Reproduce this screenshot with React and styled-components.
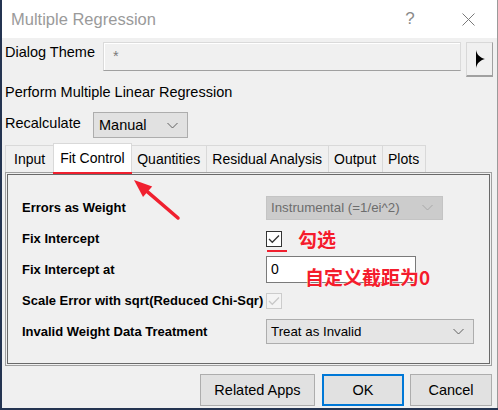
import React from 'react';
import styled, { createGlobalStyle } from 'styled-components';

const GlobalStyle = createGlobalStyle`
  html, body {
    margin: 0;
    padding: 0;
    background: #243451;
  }
  body {
    width: 498px;
    height: 410px;
    overflow: hidden;
    font-family: "Liberation Sans", Arial, sans-serif;
  }
`;

const Window = styled.div`
  position: relative;
  margin-left: 2px;
  width: 495px;
  height: 408px;
  background: #f0f0f0;
  border-right: 1px solid #9a9a9a;
  display: flex;
  flex-direction: column;
  font-size: 14.5px;
  color: #000;
`;

const TitleBar = styled.div`
  height: 38px;
  background: #fff;
  display: flex;
  align-items: center;
  padding-left: 9px;
`;

const TitleText = styled.div`
  flex: 1;
  font-size: 16.5px;
  color: #9a9a9a;
`;

const CaptionButton = styled.div`
  width: 58px;
  height: 38px;
  display: flex;
  align-items: center;
  justify-content: center;
  color: #8a8a8a;
  font-size: 17px;
`;

const ThemeRow = styled.div`
  margin-top: 4px;
  height: 35px;
  display: flex;
  align-items: flex-start;
  padding-left: 3px;
`;

const RowLabel = styled.div`
  width: ${(p) => p.width}px;
  line-height: 20px;
  margin-top: ${(p) => p.offset || 0}px;
  white-space: nowrap;
`;

const ThemeField = styled.div`
  box-sizing: border-box;
  width: 358px;
  height: 29px;
  background: #f0f0f0;
  border: 1px solid #dadada;
  border-bottom-color: #a0a0a0;
  box-shadow: inset 1px 1px 0 #fff;
  color: #7a7a7a;
  padding-left: 9px;
  line-height: 27px;
`;

const ArrowButton = styled.div`
  box-sizing: border-box;
  margin-left: 5px;
  width: 27px;
  height: 35px;
  border: 1px solid #d8d8d8;
  border-right-color: #a0a0a0;
  border-bottom: 2px solid #a0a0a0;
  background: #f0f0f0;
  display: flex;
  align-items: center;
  justify-content: center;
  padding-left: 2px;
`;

const Description = styled.div`
  margin-top: 5px;
  padding-left: 3px;
  line-height: 20px;
`;

const RecalcRow = styled.div`
  margin-top: 10px;
  height: 26px;
  display: flex;
  align-items: flex-start;
  padding-left: 3px;
`;

const Combo = styled.div`
  box-sizing: border-box;
  width: ${(p) => p.width}px;
  height: ${(p) => p.height}px;
  display: flex;
  align-items: center;
  justify-content: space-between;
  padding: 0 9px 0 ${(p) => p.pad || 4}px;
  background: ${(p) => (p.disabled ? '#cccccc' : p.light ? '#e5e5e5' : '#e1e1e1')};
  border: 1px solid ${(p) => (p.disabled ? '#c4c4c4' : '#adadad')};
  color: ${(p) => (p.disabled ? '#6d6d6d' : '#000')};
  font-size: ${(p) => p.size || 14.5}px;
  white-space: nowrap;
`;

const Tabs = styled.div`
  margin-top: 5px;
  height: 29px;
  display: flex;
  align-items: flex-end;
  padding-left: 3px;
`;

const Tab = styled.div`
  position: relative;
  box-sizing: border-box;
  height: ${(p) => (p.active ? 29 : 27)}px;
  margin-left: -1px;
  padding: 0 ${(p) => p.pad}px;
  display: flex;
  align-items: center;
  font-size: 14px;
  background: ${(p) => (p.active ? '#fff' : '#f0f0f0')};
  border: 1px solid #d9d9d9;
  border-bottom: none;
  z-index: ${(p) => (p.active ? 2 : 1)};
  &:first-child {
    margin-left: 0;
  }
  ${(p) =>
    p.marked &&
    `
    &::after {
      content: '';
      position: absolute;
      left: -1px;
      right: -1px;
      bottom: -2px;
      height: 2.5px;
      background: #f0202f;
    }
  `}
`;

const Panel = styled.div`
  box-sizing: border-box;
  margin-left: 3px;
  width: 487px;
  height: 194px;
  border: 1px solid #a0a0a0;
  padding: 1px;
`;

const PanelInner = styled.div`
  box-sizing: border-box;
  height: 100%;
  border: 1px solid #696969;
  padding: 17px 0 0 14px;
  display: grid;
  grid-template-columns: 244px 1fr;
  grid-auto-rows: 31px;
  align-items: center;
`;

const FieldLabel = styled.div`
  font-weight: bold;
  font-size: 13px;
  white-space: nowrap;
`;

const CheckCell = styled.div`
  display: flex;
  align-items: center;
  gap: 16px;
`;

const CheckBox = styled.div`
  position: relative;
  box-sizing: border-box;
  width: 16px;
  height: 16px;
  border: 1px solid ${(p) => (p.disabled ? '#cccccc' : '#333')};
  background: ${(p) => (p.disabled ? '#f4f4f4' : '#fff')};
  display: flex;
  align-items: center;
  justify-content: center;
  ${(p) =>
    p.marked &&
    `
    &::after {
      content: '';
      position: absolute;
      left: 0;
      top: 18px;
      width: 20px;
      height: 2.5px;
      background: #f0202f;
    }
  `}
`;

const Note = styled.span`
  font-family: "Noto Sans CJK SC", "Liberation Sans", sans-serif;
  font-weight: bold;
  font-size: ${(p) => p.size}px;
  color: #f41c2c;
  text-shadow: 0 0 1px #fff, 0 0 1px #fff;
  white-space: nowrap;
`;

const InputCell = styled.div`
  position: relative;
`;

const TextInput = styled.div`
  box-sizing: border-box;
  width: 150px;
  height: 27px;
  background: #fff;
  border: 1px solid #7a7a7a;
  padding-left: 4px;
  line-height: 25px;
  font-size: 14px;
`;

const OverNote = styled(Note)`
  position: absolute;
  left: 39px;
  top: 10px;
  line-height: 22px;
`;

const Footer = styled.div`
  margin-top: 8px;
  display: flex;
  justify-content: flex-end;
  gap: 6px;
  padding-right: 5px;
`;

const Button = styled.div`
  box-sizing: border-box;
  width: ${(p) => p.width}px;
  height: 32px;
  margin-right: ${(p) => p.space || 0}px;
  display: flex;
  align-items: center;
  justify-content: center;
  background: #e1e1e1;
  border: ${(p) => (p.primary ? '2px solid #0078d7' : '1px solid #adadad')};
`;

const ArrowMark = styled.svg`
  position: absolute;
  left: 125px;
  top: 173px;
  pointer-events: none;
  z-index: 5;
`;

const Chevron = ({ color = '#606060' }) => (
  <svg width="11" height="7" viewBox="0 0 11 7">
    <polyline points="0.5,1 5.5,6 10.5,1" fill="none" stroke={color} strokeWidth="1" />
  </svg>
);

const Check = ({ color }) => (
  <svg width="12" height="10" viewBox="0 0 12 10">
    <polyline points="1,5 4.3,8.3 11,1.5" fill="none" stroke={color} strokeWidth="1.3" />
  </svg>
);

export default function App() {
  return (
    <>
      <GlobalStyle />
      <Window>
        <TitleBar>
          <TitleText>Multiple Regression</TitleText>
          <CaptionButton>?</CaptionButton>
          <CaptionButton>
            <svg width="13" height="13" viewBox="0 0 13 13">
              <path d="M0.5 0.5 L12.5 12.5 M12.5 0.5 L0.5 12.5" stroke="#7a7a7a" strokeWidth="1" />
            </svg>
          </CaptionButton>
        </TitleBar>

        <ThemeRow>
          <RowLabel width={98}>Dialog Theme</RowLabel>
          <ThemeField>*</ThemeField>
          <ArrowButton>
            <svg width="9" height="18" viewBox="0 0 9 18">
              <path d="M0 0 C1 5 4 7.5 9 9 C4 10.5 1 13 0 18 Z" fill="#000" />
            </svg>
          </ArrowButton>
        </ThemeRow>

        <Description>Perform Multiple Linear Regression</Description>

        <RecalcRow>
          <RowLabel width={88} offset={1}>Recalculate</RowLabel>
          <Combo width={95} height={26} pad={5}>
            Manual
            <Chevron />
          </Combo>
        </RecalcRow>

        <Tabs>
          <Tab pad={8}>Input</Tab>
          <Tab pad={6} active marked>Fit Control</Tab>
          <Tab pad={5.5}>Quantities</Tab>
          <Tab pad={5.5}>Residual Analysis</Tab>
          <Tab pad={5.5}>Output</Tab>
          <Tab pad={5.5}>Plots</Tab>
        </Tabs>

        <Panel>
          <PanelInner>
            <FieldLabel>Errors as Weight</FieldLabel>
            <Combo width={177} height={24} disabled size={13.3}>
              Instrumental (=1/ei^2)
              <Chevron color="#a8a8a8" />
            </Combo>

            <FieldLabel>Fix Intercept</FieldLabel>
            <CheckCell>
              <CheckBox marked>
                <Check color="#333" />
              </CheckBox>
              <Note size={19}>勾选</Note>
            </CheckCell>

            <FieldLabel>Fix Intercept at</FieldLabel>
            <InputCell>
              <TextInput>0</TextInput>
              <OverNote size={19}>自定义截距为0</OverNote>
            </InputCell>

            <FieldLabel>Scale Error with sqrt(Reduced Chi-Sqr)</FieldLabel>
            <CheckCell>
              <CheckBox disabled>
                <Check color="#c8c8c8" />
              </CheckBox>
            </CheckCell>

            <FieldLabel>Invalid Weight Data Treatment</FieldLabel>
            <Combo width={208} height={25} light size={13.3}>
              Treat as Invalid
              <Chevron />
            </Combo>
          </PanelInner>
        </Panel>

        <Footer>
          <Button width={115} space={1}>Related Apps</Button>
          <Button width={82} primary>OK</Button>
          <Button width={82}>Cancel</Button>
        </Footer>

        <ArrowMark width="60" height="50" viewBox="0 0 60 50">
          <line x1="20.6" y1="18.8" x2="51" y2="45" stroke="#f0202f" strokeWidth="3.5" strokeLinecap="round" />
          <polygon points="7,7 16,24.1 25.2,13.5" fill="#f0202f" />
        </ArrowMark>
      </Window>
    </>
  );
}
